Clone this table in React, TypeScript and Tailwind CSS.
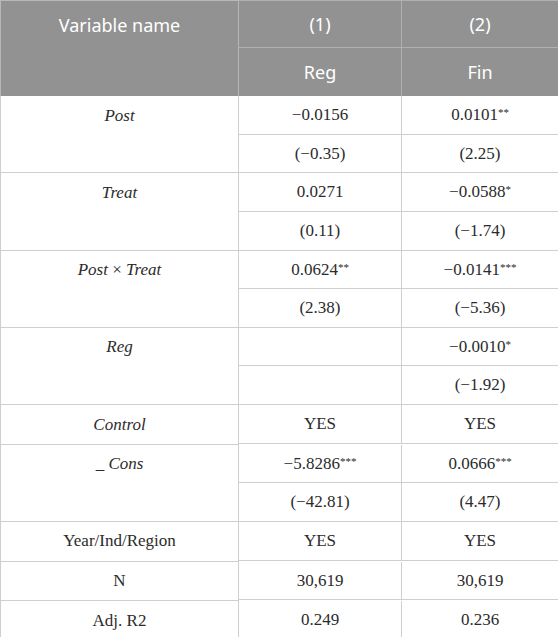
import React from "react";

type Row = {
  label: React.ReactNode;
  values: [string, string][];
};

const rows: Row[] = [
  { label: <i>Post</i>, values: [["−0.0156", "0.0101**"], ["(−0.35)", "(2.25)"]] },
  { label: <i>Treat</i>, values: [["0.0271", "−0.0588*"], ["(0.11)", "(−1.74)"]] },
  {
    label: (
      <>
        <i>Post</i>
        {" × "}
        <i>Treat</i>
      </>
    ),
    values: [["0.0624**", "−0.0141***"], ["(2.38)", "(−5.36)"]],
  },
  { label: <i>Reg</i>, values: [["", "−0.0010*"], ["", "(−1.92)"]] },
  { label: <i>Control</i>, values: [["YES", "YES"]] },
  {
    label: (
      <>
        {"_ "}
        <i>Cons</i>
      </>
    ),
    values: [["−5.8286***", "0.0666***"], ["(−42.81)", "(4.47)"]],
  },
  { label: "Year/Ind/Region", values: [["YES", "YES"]] },
  { label: "N", values: [["30,619", "30,619"]] },
  { label: "Adj. R2", values: [["0.249", "0.236"]] },
];

function Val({ v }: { v: string }) {
  const m = v.match(/^(.*?)(\**)$/);
  const base = m ? m[1] : v;
  const stars = m ? m[2] : "";
  return (
    <span>
      {base}
      {stars && <span className="text-[11px] relative top-[-4px]">{stars}</span>}
    </span>
  );
}

const cellText =
  "flex items-center justify-center text-[17px] text-[#2b2b2b] font-['Liberation_Serif','Times_New_Roman',serif]";

function ValueCell({ v, first }: { v: string; first: boolean }) {
  return (
    <div className={`${cellText} h-full border-b border-[#cfcfcf] ${first ? "border-r" : ""}`}>
      <Val v={v} />
    </div>
  );
}

function Group({ row }: { row: Row }) {
  return (
    <div className="flex">
      <div className="w-[239px] shrink-0 border-l border-r border-b border-[#cfcfcf] flex flex-col">
        <div className={`${cellText} h-[38.64px]`}>
          <span className="whitespace-pre">{row.label}</span>
        </div>
      </div>
      <div className="flex-1 flex flex-col">
        {row.values.map((pair, j) => (
          <div key={j} className="grid grid-cols-[163px_1fr] h-[38.64px]">
            <ValueCell v={pair[0]} first />
            <ValueCell v={pair[1]} first={false} />
          </div>
        ))}
      </div>
    </div>
  );
}

const headText = "text-white text-[18px] font-['Noto_Sans','Open_Sans',sans-serif]";

export default function App() {
  return (
    <div className="w-[558px] h-[637px] bg-white overflow-hidden">
      <div className="flex h-[96px] bg-[#929292]">
        <div className={`w-[239px] shrink-0 border-t border-l border-r border-[#b8b8b8] flex justify-center pt-[11px] ${headText}`}>
          Variable name
        </div>
        <div className="flex-1 grid grid-cols-[163px_1fr] grid-rows-2">
          <div className={`border-t border-r border-b border-[#b0b0b0] flex items-center justify-center ${headText}`}>(1)</div>
          <div className={`border-t border-b border-[#b0b0b0] flex items-center justify-center ${headText}`}>(2)</div>
          <div className={`border-r border-[#b0b0b0] flex items-center justify-center ${headText}`}>Reg</div>
          <div className={`flex items-center justify-center ${headText}`}>Fin</div>
        </div>
      </div>
      {rows.map((row, i) => (
        <Group key={i} row={row} />
      ))}
    </div>
  );
}
